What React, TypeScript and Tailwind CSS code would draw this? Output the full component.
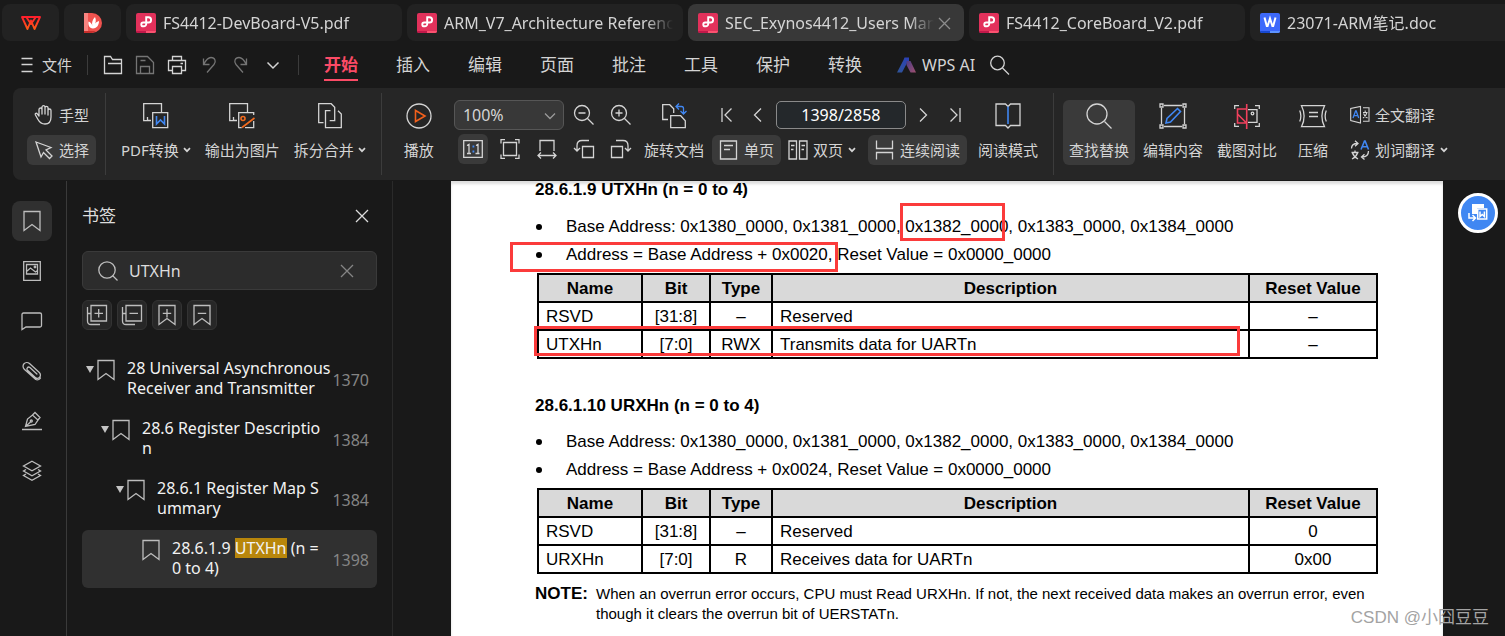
import React from "react";

const UI = "font-['Noto_Sans','Noto_Sans_CJK_SC',sans-serif]";

type IconProps = {
  w: number;
  h: number;
  children: React.ReactNode;
  className?: string;
};

function Icon({ w, h, children, className = "" }: IconProps) {
  return (
    <svg
      width={w}
      height={h}
      viewBox={`0 0 ${w} ${h}`}
      fill="none"
      stroke="currentColor"
      strokeWidth="1.3"
      className={`shrink-0 ${className}`}
      aria-hidden="true"
    >
      {children}
    </svg>
  );
}

function Caret() {
  return (
    <Icon w={8} h={6}>
      <path d="M1 1.2 4 4.2 7 1.2" strokeWidth="1.7" />
    </Icon>
  );
}

function PdfBadge() {
  return (
    <svg width="20" height="20" viewBox="0 0 20 20" className="shrink-0" aria-hidden="true">
      <rect width="20" height="20" rx="2" fill="#e2315b" />
      <path d="M0 18h10v2H2a2 2 0 0 1-2-2Z" fill="#c2184a" />
      <path d="M10 18h10a2 2 0 0 1-2 2h-8Z" fill="#fb5270" />
      <path
        d="M10.200 11.500V4.300h2.300a2.500 2.500 0 0 1 0 5.200H7.200a1.900 1.900 0 1 0 0 3.800h.6a2.300 2.300 0 0 0 2.400-2.300"
        fill="none"
        stroke="#fff"
        strokeWidth="1.900"
      />
    </svg>
  );
}

function WordBadge() {
  return (
    <svg width="20" height="20" viewBox="0 0 20 20" className="shrink-0" aria-hidden="true">
      <rect width="20" height="20" rx="2" fill="#3d69fb" />
      <path d="M0 18h10v2H2a2 2 0 0 1-2-2Z" fill="#1748d0" />
      <path d="M10 18h10a2 2 0 0 1-2 2h-8Z" fill="#5e93ff" />
      <path d="m4.500 4.500 2.300 8.500h.8l2.400-7.500 2.400 7.500h.8l2.300-8.500" fill="none" stroke="#fff" strokeWidth="2" />
    </svg>
  );
}

function DocTab({
  title,
  active = false,
  word = false,
}: {
  title: string;
  active?: boolean;
  word?: boolean;
}) {
  return (
    <div
      className={`flex h-[37px] w-[276px] shrink-0 items-center rounded-lg pr-2.5 pl-2.5 ${
        active ? "bg-[#383838]" : "bg-[#222222]"
      }`}
    >
      <button type="button" className="flex min-w-0 flex-1 items-center gap-[7px] text-left">
        {word ? <WordBadge /> : <PdfBadge />}
        <span className="min-w-0 flex-1 overflow-hidden mask-r-from-88% text-base leading-5 whitespace-nowrap text-[#d4d4d4]">
          {title}
        </span>
      </button>
      {active && (
        <button type="button" aria-label="关闭标签" className="text-[#8c8c8c]">
          <Icon w={20} h={20}>
            <path d="m5 5 11 11M16 5 5 16" />
          </Icon>
        </button>
      )}
    </div>
  );
}

function TabBar() {
  return (
    <div className="flex gap-[5px] overflow-hidden pt-1 pl-0.5">
      <button
        type="button"
        aria-label="WPS"
        className="flex h-[37px] w-[57px] shrink-0 items-center justify-center rounded-lg bg-[#222222]"
      >
        <svg width="20" height="16" viewBox="0 0 20 16" fill="none" aria-hidden="true">
          <defs>
            <linearGradient id="wps" x1="0" y1="0" x2="0" y2="1">
              <stop offset="0" stopColor="#ff1f2c" />
              <stop offset="1" stopColor="#ff5a16" />
            </linearGradient>
          </defs>
          <path
            d="M1 2h18l-5.500 12L10 5.500 6.500 14 1 2Zm4.200 0 4.800 7 4.800-7"
            stroke="url(#wps)"
            strokeWidth="1.900"
            strokeLinejoin="round"
          />
        </svg>
      </button>
      <button
        type="button"
        aria-label="稻壳"
        className="flex h-[37px] w-[57px] shrink-0 items-center justify-center rounded-lg bg-[#222222]"
      >
        <svg width="20" height="20" viewBox="0 0 20 20" aria-hidden="true">
          <path d="M1 0h8a10 10 0 0 1 0 20H1Z" fill="#f0534f" />
          <path d="M1 0h4v20H1Z" fill="#f98480" />
          <path d="M1 18h12l-4 2H1Z" fill="#c92f2c" />
          <path d="M10 15.500C6 15 5 12 5.500 8.500 8 9.500 9 11 9.300 13 8.500 9.500 9.500 6.500 12 4c1.500 3 .8 6-.8 8.500 1-2.500 2.300-3.800 4.800-4.500 0 4-2 7.200-6 7.500Z" fill="#fff" />
        </svg>
      </button>
      <DocTab title="FS4412-DevBoard-V5.pdf" />
      <DocTab title="ARM_V7_Architecture Reference" />
      <DocTab title="SEC_Exynos4412_Users Manual" active />
      <DocTab title="FS4412_CoreBoard_V2.pdf" />
      <DocTab title="23071-ARM笔记.doc" word />
    </div>
  );
}

const menus = ["开始", "插入", "编辑", "页面", "批注", "工具", "保护", "转换"];

function MenuBar() {
  return (
    <div className="flex h-[47px] items-center pl-5 text-[#d4d4d4]">
      <button type="button" className="flex items-center gap-2 text-[15px] leading-5">
        <Icon w={14} h={18}>
          <path d="M1.500 2.500h11M1.500 8.500h11M1.500 15.500h11" />
        </Icon>
        文件
      </button>
      <div className="ml-[15px] h-5 w-px bg-[#3c3c3c]" />
      <div className="ml-[15px] flex items-center gap-3">
        <button type="button" aria-label="打开">
          <Icon w={20} h={20}>
            <path d="M1.500 18.500v-17h6l2 3h9v14ZM5 8.500h13.500" />
          </Icon>
        </button>
        <button type="button" aria-label="保存" className="text-[#757575]">
          <Icon w={20} h={20}>
            <path d="M1.500 1.500h11l6 6v11h-17ZM5.500 5.500h5M5.500 18v-6.500h9V18" />
          </Icon>
        </button>
        <button type="button" aria-label="打印">
          <Icon w={20} h={20}>
            <path d="M5.500 5.500v-4h9v4M5.500 15.500h-4v-10h17v10h-4M5.500 11.500h9v7h-9ZM13.500 8.500h2.500" />
          </Icon>
        </button>
        <button type="button" aria-label="撤销" className="text-[#757575]">
          <Icon w={20} h={20}>
            <path d="M4.500 3.500v6h6M4.800 9.200C7 5 9 2.500 12 2.500c4 0 5.500 4 3 7L8 17.500" />
          </Icon>
        </button>
        <button type="button" aria-label="恢复" className="text-[#757575]">
          <Icon w={20} h={20}>
            <path d="M15.500 3.500v6h-6M15.200 9.200C13 5 11 2.500 8 2.500c-4 0-5.500 4-3 7l7 8" />
          </Icon>
        </button>
        <button type="button" aria-label="更多">
          <Icon w={20} h={20}>
            <path d="m4.500 7.500 5.500 5.500 5.500-5.500" strokeWidth="1.500" />
          </Icon>
        </button>
      </div>
      <div className="ml-[15px] h-5 w-px bg-[#3c3c3c]" />
      <nav className="ml-[25px] flex gap-[38px] text-[17px] leading-6">
        {menus.map((m, i) => (
          <a
            key={m}
            href={`#tab-${i}`}
            className={
              i === 0
                ? "border-y-2 border-t-transparent border-b-[#fb4b66] py-0.5 font-bold text-[#fb4b66]"
                : "border-y-2 border-transparent py-0.5"
            }
          >
            {m}
          </a>
        ))}
      </nav>
      <button type="button" className="ml-[35px] flex items-center gap-1.5 text-base leading-5">
        <svg width="19" height="16" viewBox="0 0 19 16" aria-hidden="true">
          <defs>
            <linearGradient id="ai-a" x1="0" y1="1" x2="1" y2="0">
              <stop offset="0" stopColor="#2f5597" />
              <stop offset="1" stopColor="#2b3fb8" />
            </linearGradient>
            <linearGradient id="ai-b" x1="0" y1="0" x2="1" y2="1">
              <stop offset="0" stopColor="#4a3c86" />
              <stop offset="1" stopColor="#a0506f" />
            </linearGradient>
          </defs>
          <path d="M7.500.5H12v4.500L10 6 5 15.500H0L6.500 3Z" fill="url(#ai-a)" />
          <path d="M9.500 4h4L19 15.500h-5.500L9.500 8Z" fill="url(#ai-b)" />
        </svg>
        WPS AI
      </button>
      <button type="button" aria-label="搜索" className="ml-[15px]">
        <Icon w={20} h={20}>
          <circle cx="7.500" cy="8" r="6.800" />
          <path d="m12.500 13 6.500 6.500" />
        </Icon>
      </button>
    </div>
  );
}

function Divider() {
  return <div className="-mt-[7px] h-[82px] w-px shrink-0 bg-[#3c3c3c]" />;
}

function BigButton({
  label,
  children,
  caret = false,
  active = false,
}: {
  label: string;
  children: React.ReactNode;
  caret?: boolean;
  active?: boolean;
}) {
  return (
    <button
      type="button"
      className={`flex h-[65px] shrink-0 flex-col items-center gap-[11px] pt-[3px] ${
        active ? "rounded-md bg-[#3a3a3a] px-1.5" : ""
      }`}
    >
      {children}
      <span className="flex items-center gap-1 whitespace-nowrap">
        {label}
        {caret && <Caret />}
      </span>
    </button>
  );
}

function SmallButton({
  label,
  children,
  caret = false,
  active = false,
}: {
  label: string;
  children: React.ReactNode;
  caret?: boolean;
  active?: boolean;
}) {
  return (
    <button
      type="button"
      className={`flex h-[30px] shrink-0 items-center gap-[5px] rounded-md px-[7px] whitespace-nowrap ${
        active ? "bg-[#3a3a3a]" : ""
      }`}
    >
      {children}
      {label}
      {caret && <Caret />}
    </button>
  );
}

function IconButton({
  label,
  children,
  active = false,
}: {
  label: string;
  children: React.ReactNode;
  active?: boolean;
}) {
  return (
    <button
      type="button"
      aria-label={label}
      className={`flex h-[30px] w-[30px] items-center justify-center rounded-md ${active ? "bg-[#3a3a3a]" : ""}`}
    >
      {children}
    </button>
  );
}

function Ribbon() {
  return (
    <div className="ml-[13px] flex h-[92px] shrink-0 items-start overflow-hidden rounded-l-lg bg-[#262626] pt-3 pl-3.5 text-[15px] leading-5 text-[#d4d4d4]">
      <div className="flex flex-col gap-[5px]">
        <SmallButton label="手型">
          <Icon w={20} h={20}>
            <path
              d="M5 11V4.500a1.500 1.500 0 0 1 3 0V9 2.200a1.500 1.500 0 0 1 3 0V9 2.800a1.500 1.500 0 0 1 3 0V10 5.500a1.500 1.500 0 0 1 3 0V12c0 4.500-2.500 7-6 7-3.600 0-5.400-1.500-7-4.500L1.300 9.800c-.4-1.400 1.200-2 2-1L5 11Z"
              strokeLinejoin="round"
            />
          </Icon>
        </SmallButton>
        <SmallButton label="选择" active>
          <Icon w={20} h={20}>
            <path d="M2 2 17 7.500l-5 2.500 6 6-2.500 2.500-6-6L7 17 2 2Z" />
          </Icon>
        </SmallButton>
      </div>
      <div className="w-[9px] shrink-0" />
      <Divider />
      <div className="flex shrink-0 gap-3.5 pr-[15px] pl-[15px]">
        <BigButton label="PDF转换" caret>
          <Icon w={26} h={26}>
            <path d="M18.500 9V.7H.7v17h6M4.500 14v3.500H8M9.700 9.700h15v15h-15Z" />
            <path d="M13.500 13v8l4-4 4 4v-8" stroke="#4087f2" strokeWidth="1.600" />
          </Icon>
        </BigButton>
        <BigButton label="输出为图片">
          <Icon w={26} h={26}>
            <path d="M18.500 9V.7H.7v17h6M4.500 14v3.500H8M25 9.700H9.700v15h3M24.700 18v6.700H16M24.700 9v3" />
            <path d="m13 24.500 12.500-9.500M16 15.500a2 2 0 1 1-4 0 2 2 0 0 1 4 0Z" stroke="#f26b1f" strokeWidth="1.600" />
          </Icon>
        </BigButton>
        <BigButton label="拆分合并" caret>
          <Icon w={24} h={26}>
            <path d="M5.500 19.700H.7V.7h12.500l3.500 3.500v13.500h-5M12.500 7.700h-5v17h15.800V11L20 7.700" />
          </Icon>
        </BigButton>
      </div>
      <Divider />
      <div className="pr-5 pl-[22px]">
        <BigButton label="播放">
          <Icon w={26} h={26}>
            <circle cx="13" cy="13" r="12" />
            <path d="M9.500 7.500v11L19 13Z" stroke="#f2601c" strokeWidth="1.600" />
          </Icon>
        </BigButton>
      </div>
      <div className="flex shrink-0 flex-col gap-1">
        <div className="flex items-center">
          <div className="relative">
            <select
              aria-label="缩放比例"
              className="h-[30px] w-[110px] appearance-none rounded-md border border-[#565656] bg-[#383838] pl-2 text-base leading-5 outline-none"
            >
              <option>100%</option>
            </select>
            <Icon w={12} h={8} className="pointer-events-none absolute top-3 right-2 text-[#9a9a9a]">
              <path d="m1 1.500 5 5 5-5" />
            </Icon>
          </div>
          <div className="ml-[5px] flex gap-[7px]">
            <IconButton label="缩小">
              <Icon w={22} h={22}>
                <circle cx="9" cy="9" r="7.500" />
                <path d="m14.500 14.500 6 6M5.500 9h7" />
              </Icon>
            </IconButton>
            <IconButton label="放大">
              <Icon w={22} h={22}>
                <circle cx="9" cy="9" r="7.500" />
                <path d="m14.500 14.500 6 6M5.500 9h7M9 5.500v7" />
              </Icon>
            </IconButton>
          </div>
        </div>
        <div className="flex gap-[7px] pl-1">
          <IconButton label="实际大小" active>
            <Icon w={20} h={20}>
              <path d="M.7 1.700h18.600v16.600H.7ZM4 6.500l2-1.200v9M4 14.500h4M13 6.500l2-1.200v9M12.500 14.500h4" />
              <path d="M9.500 7.500h1.800M9.500 12.500h1.800" stroke="#4087f2" strokeWidth="2" />
            </Icon>
          </IconButton>
          <IconButton label="适合页面">
            <Icon w={20} h={20}>
              <path d="M3.500 3.500h13v13h-13ZM1 4.500V.7h4M15 .7h4v3.800M1 15.500v3.800h4M15 19.300h4v-3.800" />
            </Icon>
          </IconButton>
          <IconButton label="适合宽度">
            <Icon w={20} h={20}>
              <path d="M3 12V1.500h14V12M1 16.500h18M4 13.500l-3 3 3 3M16 13.500l3 3-3 3" />
            </Icon>
          </IconButton>
          <IconButton label="向左旋转">
            <Icon w={22} h={20}>
              <path d="M9.500 7.500h11v11h-11ZM16 1.500H9c-3.500 0-5 2-5 5v5M1 9l3 3 3-3" />
            </Icon>
          </IconButton>
          <IconButton label="向右旋转">
            <Icon w={22} h={20}>
              <path d="M1.500 7.500h11v11h-11ZM6 1.500h7c3.500 0 5 2 5 5v5M15 9l3 3 3-3" />
            </Icon>
          </IconButton>
        </div>
      </div>
      <div className="pl-2">
        <BigButton label="旋转文档">
          <Icon w={26} h={26}>
            <path d="M7 16.500H1.700V1.700h7l4 4V10M9.700 12.700h10l4.600 5v7H9.700Z" />
            <path d="M15 3.500h5.500c1.500 0 2 .5 2 2V11M18 .5l-3 3 3 3M19.500 8l3 3 3-3" stroke="#4087f2" />
          </Icon>
        </BigButton>
      </div>
      <div className="flex shrink-0 flex-col gap-[5px] pl-2">
        <div className="flex h-[30px] items-center justify-between pr-[6px] pl-[9px]">
          <button type="button" aria-label="第一页">
            <Icon w={12} h={16}>
              <path d="M1 1v14M10.500 1.500 4 8l6.500 6.500" />
            </Icon>
          </button>
          <button type="button" aria-label="上一页" className="ml-2">
            <Icon w={12} h={16}>
              <path d="M9 1.500 2.500 8 9 14.500" />
            </Icon>
          </button>
          <input
            aria-label="页码"
            defaultValue="1398/2858"
            className="h-7 w-[130px] rounded-[5px] border border-[#8a8a8a] bg-[#24282b] text-center text-base leading-5 text-white outline-none"
          />
          <button type="button" aria-label="下一页">
            <Icon w={12} h={16}>
              <path d="M3 1.500 9.500 8 3 14.500" />
            </Icon>
          </button>
          <button type="button" aria-label="最后一页" className="ml-2">
            <Icon w={12} h={16}>
              <path d="M11 1v14M1.500 1.500 8 8l-6.500 6.500" />
            </Icon>
          </button>
        </div>
        <div className="flex">
          <SmallButton label="单页" active>
            <Icon w={20} h={20}>
              <path d="M1.500 1h16v18h-16ZM5 5.500h9M5 9.500h6" />
            </Icon>
          </SmallButton>
          <SmallButton label="双页" caret>
            <Icon w={20} h={20}>
              <path d="M1 1h7.500v18H1ZM11.500 1H19v18h-7.500ZM3 5.500h3.500M3 9.500h2.500M13.500 5.500H17M13.500 9.500H16" />
            </Icon>
          </SmallButton>
          <div className="w-[5px]" />
          <SmallButton label="连续阅读" active>
            <Icon w={20} h={20}>
              <path d="M1.500.5v8h16v-8M1.500 19.500v-7h16v7" />
            </Icon>
          </SmallButton>
        </div>
      </div>
      <div className="pr-[15px] pl-[11px]">
        <BigButton label="阅读模式">
          <Icon w={26} h={26}>
            <path d="M13 3.500 10.500 1H1v21.500h9.500L13 25l2.500-2.500H25V1h-9.500Z" />
            <path d="M13 3.500V21" stroke="#4087f2" strokeWidth="1.600" />
          </Icon>
        </BigButton>
      </div>
      <Divider />
      <div className="flex shrink-0 gap-3.5 pl-[9px]">
        <BigButton label="查找替换" active>
          <Icon w={26} h={26}>
            <circle cx="11" cy="11" r="10" />
            <path d="m18.500 18.500 7 7" />
          </Icon>
        </BigButton>
        <div className="-ml-1.5">
          <BigButton label="编辑内容">
            <Icon w={28} h={26}>
              <path d="M1 1h3v3H1ZM24 1h3v3h-3ZM1 22h3v3H1ZM24 22h3v3h-3ZM5 2.500h18M5 23.500h18M2.500 5v16M25.500 5v16" />
              <path d="m7 20 1-4.500L18.500 5.500l3 3L11.500 19 7 20Z" stroke="#4087f2" strokeWidth="1.600" />
            </Icon>
          </BigButton>
        </div>
        <BigButton label="截图对比">
          <Icon w={26} h={26}>
            <path d="M.7 6V2.700H5M21 2.700h4.300V6M.7 20v3.300H5M21 23.300h4.300V20M14 6.700h9v12.600h-9" />
            <circle cx="18.500" cy="10.500" r="1.300" />
            <path d="M12.700 1v25M12.700 6H3.500v14h9.200M3.500 11l9 9" stroke="#f0405c" strokeWidth="1.600" />
          </Icon>
        </BigButton>
        <div className="px-[7px]">
          <BigButton label="压缩">
            <Icon w={28} h={26}>
              <path d="M2.500 2.700h23c-3.500 7-3.500 14 0 21h-23c3.500-7 3.500-14 0-21ZM10 9.500h9M10 13.500h9M.7 7.500c1.600 3.800 1.600 7.200 0 11M27.300 7.500c-1.600 3.800-1.600 7.200 0 11" />
            </Icon>
          </BigButton>
        </div>
        <div className="-ml-1.5 flex flex-col gap-[5px]">
          <SmallButton label="全文翻译">
            <Icon w={20} h={20}>
              <path d="M10.500 1.500v16.500L.7 15.500V3.500ZM13 2.700h6v13.600h-6M13 7.500h4.500M15.200 5.500v2M16.800 8c-.8 2.500-2 4-3.800 5M13.500 8.500c.8 2 2 3.500 4 4.500" strokeWidth="1.100" />
              <path d="M3 13 5.600 6h.6l2.500 7M4 10.700h4" stroke="#4087f2" />
            </Icon>
          </SmallButton>
          <SmallButton label="划词翻译" caret>
            <Icon w={20} h={20}>
              <path d="M1.500 8.500C1.500 5 3 3.500 7.500 3.500M5 .8l3 2.700-3 2.700M18.500 11c0 4-2 6-6.500 6M14.500 14.200 11.500 17l3 2.500M1.500 12.500h7M5 10.500v2M7.500 13c-1 3-2.500 4.500-5.500 6M2.500 13c1 3 3 4.500 5.500 6" />
              <path d="M11 9.500 14.500 1h.6l3.400 8.500M12.300 6.800h5" stroke="#4087f2" strokeWidth="1.600" />
            </Icon>
          </SmallButton>
        </div>
      </div>
    </div>
  );
}

function BookmarkIcon({ sign = "" }: { sign?: string }) {
  return (
    <Icon w={18} h={22}>
      <path d={`M1 1.500h16v19l-8-6-8 6Z${sign}`} />
    </Icon>
  );
}

function SideRail() {
  return (
    <aside className="flex w-[67px] shrink-0 flex-col items-start gap-2.5 border-r border-[#3a3a3a] pt-5 pl-3 text-[#bdbdbd]">
      <button type="button" aria-label="书签" className="flex size-10 items-center justify-center rounded-lg bg-[#303030]">
        <BookmarkIcon />
      </button>
      <button type="button" aria-label="缩略图" className="flex size-10 items-center justify-center">
        <Icon w={20} h={22}>
          <path d="M1.700 1.700h16.600v18.600H1.700ZM4.500 4.500h11v9.500h-11ZM4.500 11.500 8.500 8l5 4 2-1.500" />
          <circle cx="13" cy="7" r=".8" />
        </Icon>
      </button>
      <button type="button" aria-label="批注" className="flex size-10 items-center justify-center">
        <Icon w={22} h={20}>
          <path d="M1 18.500V3.500c0-1 .5-1.500 1.500-1.500h16.500c1 0 1.500.5 1.500 1.500v11c0 1-.5 1.500-1.500 1.500H5Z" />
        </Icon>
      </button>
      <button type="button" aria-label="附件" className="flex size-10 items-center justify-center">
        <Icon w={20} h={20}>
          <path
            d="M13.500 18.300 2.300 8.200C.8 6.800.6 4.300 2 2.800s3.900-1.600 5.500-.2l9.800 9c1.400 1.300 1.500 3.500.3 4.700-1.200 1.300-3 1.300-4.300.1L5.500 9.300c-.8-.8-.8-1.900-.1-2.600.7-.8 1.800-.7 2.500-.1l7 6.400M13.500 18.300c1.700 1 4 .4 5-1.300"
            strokeLinecap="round"
          />
        </Icon>
      </button>
      <button type="button" aria-label="签名" className="flex size-10 items-center justify-center">
        <Icon w={22} h={20}>
          <path d="M1 18.500h20M4.500 15.500 6.500 8l5-4 5.500 5-3 4.500Zm0 0L9.500 11M11.500 4 14 1.500l5 5L17 9" />
          <circle cx="10.300" cy="10" r="1" />
        </Icon>
      </button>
      <button type="button" aria-label="图层" className="flex size-10 items-center justify-center">
        <Icon w={20} h={22}>
          <path d="m10 1.200 8.500 4.800L10 10.800 1.500 6ZM4 9.500 1.500 11l8.500 4.800L18.500 11 16 9.500M4 14l-2.500 1.500L10 20.300l8.500-4.800L16 14" />
        </Icon>
      </button>
    </aside>
  );
}

function TreeRow({
  indent,
  page,
  open = true,
  selected = false,
  children,
}: {
  indent: string;
  page: string;
  open?: boolean;
  selected?: boolean;
  children: React.ReactNode;
}) {
  return (
    <li className={`flex h-[58px] items-start rounded-md pt-2 pr-2 ${indent} ${selected ? "bg-[#303030]" : ""}`}>
      <div className="w-[11px] shrink-0 pt-2">
        {open && (
          <svg width="8" height="7" viewBox="0 0 8 7" aria-hidden="true">
            <path d="M0 0h8L4 7Z" fill="#c4c4c4" />
          </svg>
        )}
      </div>
      <div className="pt-px text-[#bdbdbd]">
        <BookmarkIcon />
      </div>
      <a href={`#page-${page}`} className="ml-3 min-w-0 flex-1 whitespace-nowrap text-[#f2f2f2]">
        {children}
      </a>
      <span className="mt-3 text-[#858585]">{page}</span>
    </li>
  );
}

function BookmarkPanel() {
  const tools = [
    { label: "展开", node: <Icon w={22} h={22}><path d="M5 1.500h15.500v15.500H5ZM1.500 3v14c0 2.500 1 3.500 3.500 3.500h9M1.500 9.500H5M12.700 5v8.500M8.500 9.300H17" /></Icon> },
    { label: "收起", node: <Icon w={22} h={22}><path d="M5 1.500h15.500v15.500H5ZM1.500 3v14c0 2.500 1 3.500 3.500 3.500h9M1.500 9.500H5M8.500 9.300H17" /></Icon> },
    { label: "添加书签", node: <BookmarkIcon sign="M9 5v8.500M4.800 9.300h8.400" /> },
    { label: "删除书签", node: <BookmarkIcon sign="M4.800 9.300h8.400" /> },
  ];
  return (
    <section className="w-[326px] shrink-0 border-r border-[#2a2a2a] pr-[15px] pl-[15px]">
      <div className="flex items-center justify-between pt-[23px] pr-1.5 text-[#dcdcdc]">
        <h2 className="text-[17px] leading-6">书签</h2>
        <button type="button" aria-label="关闭">
          <Icon w={18} h={18}>
            <path d="m3 3 12 12M15 3 3 15" />
          </Icon>
        </button>
      </div>
      <div className="mt-[23px] flex h-[39px] items-center rounded-md border border-[#3a3a3a] bg-[#2c2c2c] px-3.5 text-[#bdbdbd]">
        <Icon w={22} h={22}>
          <circle cx="10" cy="10" r="8.200" />
          <path d="m15.500 15.500 5 5" />
        </Icon>
        <input
          aria-label="搜索书签"
          defaultValue="UTXHn"
          className="ml-2.5 min-w-0 flex-1 bg-transparent text-base leading-5 text-[#dcdcdc] outline-none"
        />
        <button type="button" aria-label="清除" className="mr-1.5 text-[#858585]">
          <Icon w={18} h={18}>
            <path d="m3 3 12 12M15 3 3 15" />
          </Icon>
        </button>
      </div>
      <div className="mt-2.5 flex gap-[5px] text-[#bdbdbd]">
        {tools.map((t) => (
          <button
            key={t.label}
            type="button"
            aria-label={t.label}
            className="flex size-[30px] items-center justify-center rounded-md border border-[#333333] bg-[#272727]"
          >
            {t.node}
          </button>
        ))}
      </div>
      <ul className="mt-5 flex flex-col gap-0.5 text-base leading-5">
        <TreeRow indent="pl-1" page="1370">
          28 Universal Asynchronous
          <br />
          Receiver and Transmitter
        </TreeRow>
        <TreeRow indent="pl-[19px]" page="1384">
          28.6 Register Descriptio
          <br />n
        </TreeRow>
        <TreeRow indent="pl-[34px]" page="1384">
          28.6.1 Register Map S
          <br />
          ummary
        </TreeRow>
        <TreeRow indent="pl-[49px]" page="1398" open={false} selected>
          28.6.1.9 <mark className="inline-block bg-[#b8860b] text-[#f2f2f2]">UTXHn</mark> (n =
          <br />0 to 4)
        </TreeRow>
      </ul>
    </section>
  );
}

type Row = [string, string, string, string, string];

function RegisterTable({ rows }: { rows: Row[] }) {
  return (
    <table className="w-[841px] table-fixed border-collapse text-center">
      <colgroup>
        <col className="w-[104px]" />
        <col className="w-[68px]" />
        <col className="w-[62px]" />
        <col />
        <col className="w-[128px]" />
      </colgroup>
      <thead>
        <tr className="h-7 bg-[#d9d9d9]">
          {["Name", "Bit", "Type", "Description", "Reset Value"].map((h) => (
            <th key={h} className="border-2 border-black px-0 pt-0.5 pb-0">
              {h}
            </th>
          ))}
        </tr>
      </thead>
      <tbody>
        {rows.map((r) => (
          <tr key={r[0]} className="h-7">
            {r.map((c, i) => (
              <td
                key={i}
                className={`border-2 border-black pt-0.5 pr-0 pb-0 ${i === 0 || i === 3 ? "pl-[7px] text-left" : "pl-0"}`}
              >
                {c}
              </td>
            ))}
          </tr>
        ))}
      </tbody>
    </table>
  );
}

function Bullet({ children }: { children: React.ReactNode }) {
  return (
    <li className="flex h-7 items-center">
      <span className="mr-6 ml-px size-[6px] rounded-full bg-black" />
      {children}
    </li>
  );
}

function DocumentPage() {
  return (
    <main className="relative ml-[58px] w-[992px] shrink-0 overflow-hidden bg-white pl-[84px] font-['Liberation_Sans',Arial,sans-serif] text-[17px] leading-5 text-black shadow-[inset_0_3px_3px_#ddd]">
      <h3 className="leading-[18px] font-bold">28.6.1.9 UTXHn (n = 0 to 4)</h3>
      <ul className="mt-3.5">
        <Bullet>Base Address: 0x1380_0000, 0x1381_0000, 0x1382_0000, 0x1383_0000, 0x1384_0000</Bullet>
        <Bullet>Address = Base Address + 0x0020, Reset Value = 0x0000_0000</Bullet>
      </ul>
      <div className="mt-1 pl-0.5">
        <RegisterTable
          rows={[
            ["RSVD", "[31:8]", "–", "Reserved", "–"],
            ["UTXHn", "[7:0]", "RWX", "Transmits data for UARTn", "–"],
          ]}
        />
      </div>
      <h3 className="mt-[37px] font-bold">28.6.1.10 URXHn (n = 0 to 4)</h3>
      <ul className="mt-3">
        <Bullet>Base Address: 0x1380_0000, 0x1381_0000, 0x1382_0000, 0x1383_0000, 0x1384_0000</Bullet>
        <Bullet>Address = Base Address + 0x0024, Reset Value = 0x0000_0000</Bullet>
      </ul>
      <div className="mt-1 pl-0.5">
        <RegisterTable
          rows={[
            ["RSVD", "[31:8]", "–", "Reserved", "0"],
            ["URXHn", "[7:0]", "R", "Receives data for UARTn", "0x00"],
          ]}
        />
      </div>
      <div className="mt-2.5 flex">
        <b className="w-[61px] shrink-0">NOTE:</b>
        <p className="text-[15px] leading-5 whitespace-nowrap">
          When an overrun error occurs, CPU must Read URXHn. If not, the next received data makes an overrun error, even
          <br />
          though it clears the overrun bit of UERSTATn.
        </p>
      </div>
      <div className="absolute top-[22px] left-[449px] h-[38px] w-[105px] border-3 border-[#fb3b3b]" />
      <div className="absolute top-[61px] left-[59px] h-[30px] w-[328px] border-3 border-[#fb3b3b]" />
      <div className="absolute top-[145px] left-[83px] h-[30px] w-[706px] border-3 border-[#fb3b3b]" />
    </main>
  );
}

export default function App() {
  return (
    <div className={`relative flex h-screen flex-col overflow-hidden bg-[#191919] ${UI}`}>
      <TabBar />
      <MenuBar />
      <Ribbon />
      <div className="mt-px flex min-h-0 flex-1">
        <SideRail />
        <BookmarkPanel />
        <DocumentPage />
        <div className="pt-3 pl-[15px]">
          <button
            type="button"
            aria-label="PDF转换"
            className="flex size-10 items-center justify-center rounded-full border-3 border-white bg-[#4087f2]"
          >
            <svg width="20" height="20" viewBox="0 0 20 20" fill="none" aria-hidden="true">
              <path d="M4 1h12v4H9v6H4Z" fill="#fff" />
              <path d="M9.700 6h9v10h-9Z" fill="#4087f2" stroke="#fff" strokeWidth="1.500" />
              <path d="M12 8.500v5l2.200-2 2.200 2v-5M1 10v5h6M4.500 12l3 3-3 3" stroke="#fff" strokeWidth="1.500" />
            </svg>
          </button>
        </div>
      </div>
      <div className="absolute right-4 bottom-1.5 font-['Liberation_Sans','Noto_Sans_CJK_SC',sans-serif] text-[17px] leading-6 text-[#a3a3a3]">
        CSDN @小囧豆豆
      </div>
    </div>
  );
}
